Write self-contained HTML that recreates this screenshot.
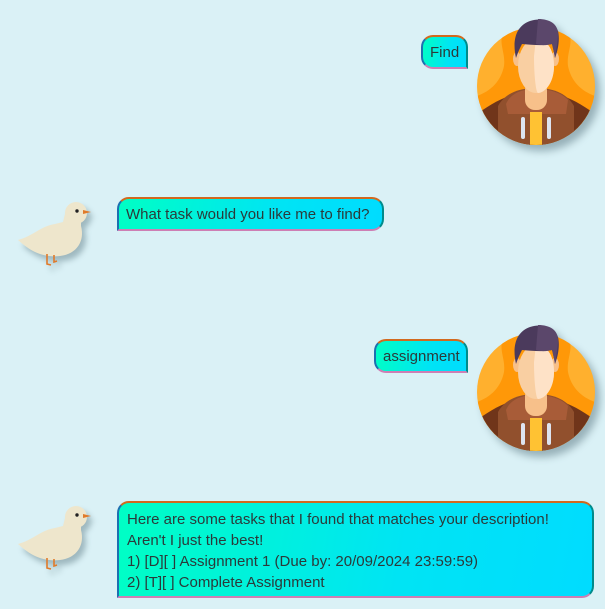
<!DOCTYPE html>
<html><head><style>
body{margin:0;width:605px;height:609px;background:#daf1f6;position:relative;overflow:hidden;font-family:"Segoe UI","Liberation Sans",sans-serif;}
.b{position:absolute;box-sizing:border-box;border:2px solid;border-color:#d2691e #008b8b #cd7fb4 #1e6fb0;background:linear-gradient(100deg,#00ffc4,#00e4f4 60%,#00dcff);color:#2b3a3a;font-size:15px;line-height:21px;padding:5px 7px;white-space:nowrap;}
.u{border-radius:12px 12px 0 12px;}
.k{border-radius:12px 12px 12px 0;}
.av{position:absolute;filter:drop-shadow(5px 6px 4px rgba(70,100,110,.45));}
.dk{position:absolute;filter:drop-shadow(4px 5px 3px rgba(70,100,110,.4));}
</style></head><body>

<div class="b u" style="left:421px;top:35px;width:47px;height:34px;padding-left:7px;">Find</div>
<div class="b k" style="left:117px;top:197px;width:267px;height:34px;">What task would you like me to find?</div>
<div class="b u" style="left:374px;top:339px;width:94px;height:34px;">assignment</div>
<div class="b k" style="left:117px;top:501px;width:477px;height:97px;padding:6px 8px;">Here are some tasks that I found that matches your description!<br>Aren't I just the best!<br>1) [D][ ] Assignment 1 (Due by: 20/09/2024 23:59:59)<br>2) [T][ ] Complete Assignment</div>

<svg width="0" height="0" style="position:absolute">
<defs>
<clipPath id="cc"><circle cx="0" cy="0" r="59"/></clipPath>
<g id="avatar">
<circle cx="0" cy="0" r="59" fill="#ffb02e"/>
<g clip-path="url(#cc)">
<path d="M-59,10 C-45,5 -35,-5 -32,-20 C-30,-35 -40,-45 -30,-58 L30,-58 C40,-45 30,-35 32,-20 C35,-5 45,5 59,10 L59,60 L-59,60Z" fill="#ff9808"/>
<path d="M-59,28 C-45,18 -35,12 -20,8 L20,8 C35,12 45,18 59,28 L59,60 L-59,60Z" fill="#70351a"/>
<path d="M-38,60 L-38,20 C-30,6 -15,2 0,2 C15,2 30,6 38,20 L38,60Z" fill="#91502d"/>
<path d="M-30,18 C-25,6 -12,3 0,3 C12,3 25,6 32,14 L30,28 L-28,28Z" fill="#a85c38"/>
<rect x="-11" y="-6" width="22" height="30" rx="10" fill="#f7c08a"/>
<rect x="-6" y="26" width="12" height="40" fill="#ffc233"/>
<rect x="-15" y="31" width="4" height="22" rx="2" fill="#dde4f0"/>
<rect x="11" y="31" width="4" height="22" rx="2" fill="#dde4f0"/>
</g>
<ellipse cx="-19" cy="-27" rx="4" ry="7" fill="#f7c08a"/>
<ellipse cx="19" cy="-27" rx="4" ry="7" fill="#f7c08a"/>
<ellipse cx="0" cy="-20" rx="18" ry="27" fill="#f9cfa2"/>
<path d="M0,-47 C10,-47 18,-38 18,-20 C18,-2 8,7 2,7 C0,7 -2,-10 -2,-30Z" fill="#fee2c7"/>
<path d="M-20,-28 C-24,-46 -20,-60 -6,-65 C6,-69 18,-65 22,-55 C24,-46 22,-36 19,-28 C18,-34 17,-38 16,-42 C8,-40 -4,-41 -14,-42 C-16,-38 -18,-34 -20,-28Z" fill="#4b3a5c"/>
<path d="M2,-67 C14,-67 22,-62 22,-52 C22,-44 20,-36 19,-28 C18,-34 17,-38 16,-42 C8,-40 4,-41 0,-42Z" fill="#5b476b"/>
</g>
<g id="duck">
<path d="M3,44 C18,40 26,30 40,28 L48,26 L51,14 L66,14 L66,30 C70,45 62,58 45,60 C28,62 15,55 3,44Z" fill="#eee6cc"/>
<circle cx="61" cy="17" r="11" fill="#eee6cc"/>
<circle cx="62" cy="15" r="1.7" fill="#222"/>
<path d="M68,14 L76,16 L68,18Z" fill="#e07a2a"/>
<path d="M32,58 L32,68 L36,69 M39,59 L39,66 L42,65" stroke="#e07a2a" stroke-width="1.6" fill="none"/>
</g>
</defs>
</svg>

<svg class="av" style="left:471px;top:15px" width="130" height="140" viewBox="-65 -71 130 140"><use href="#avatar"/></svg>
<svg class="av" style="left:471px;top:321px" width="130" height="140" viewBox="-65 -71 130 140"><use href="#avatar"/></svg>
<svg class="dk" style="left:15px;top:196px" width="90" height="80" viewBox="0 0 90 80"><use href="#duck"/></svg>
<svg class="dk" style="left:15px;top:500px" width="90" height="80" viewBox="0 0 90 80"><use href="#duck"/></svg>
</body></html>
